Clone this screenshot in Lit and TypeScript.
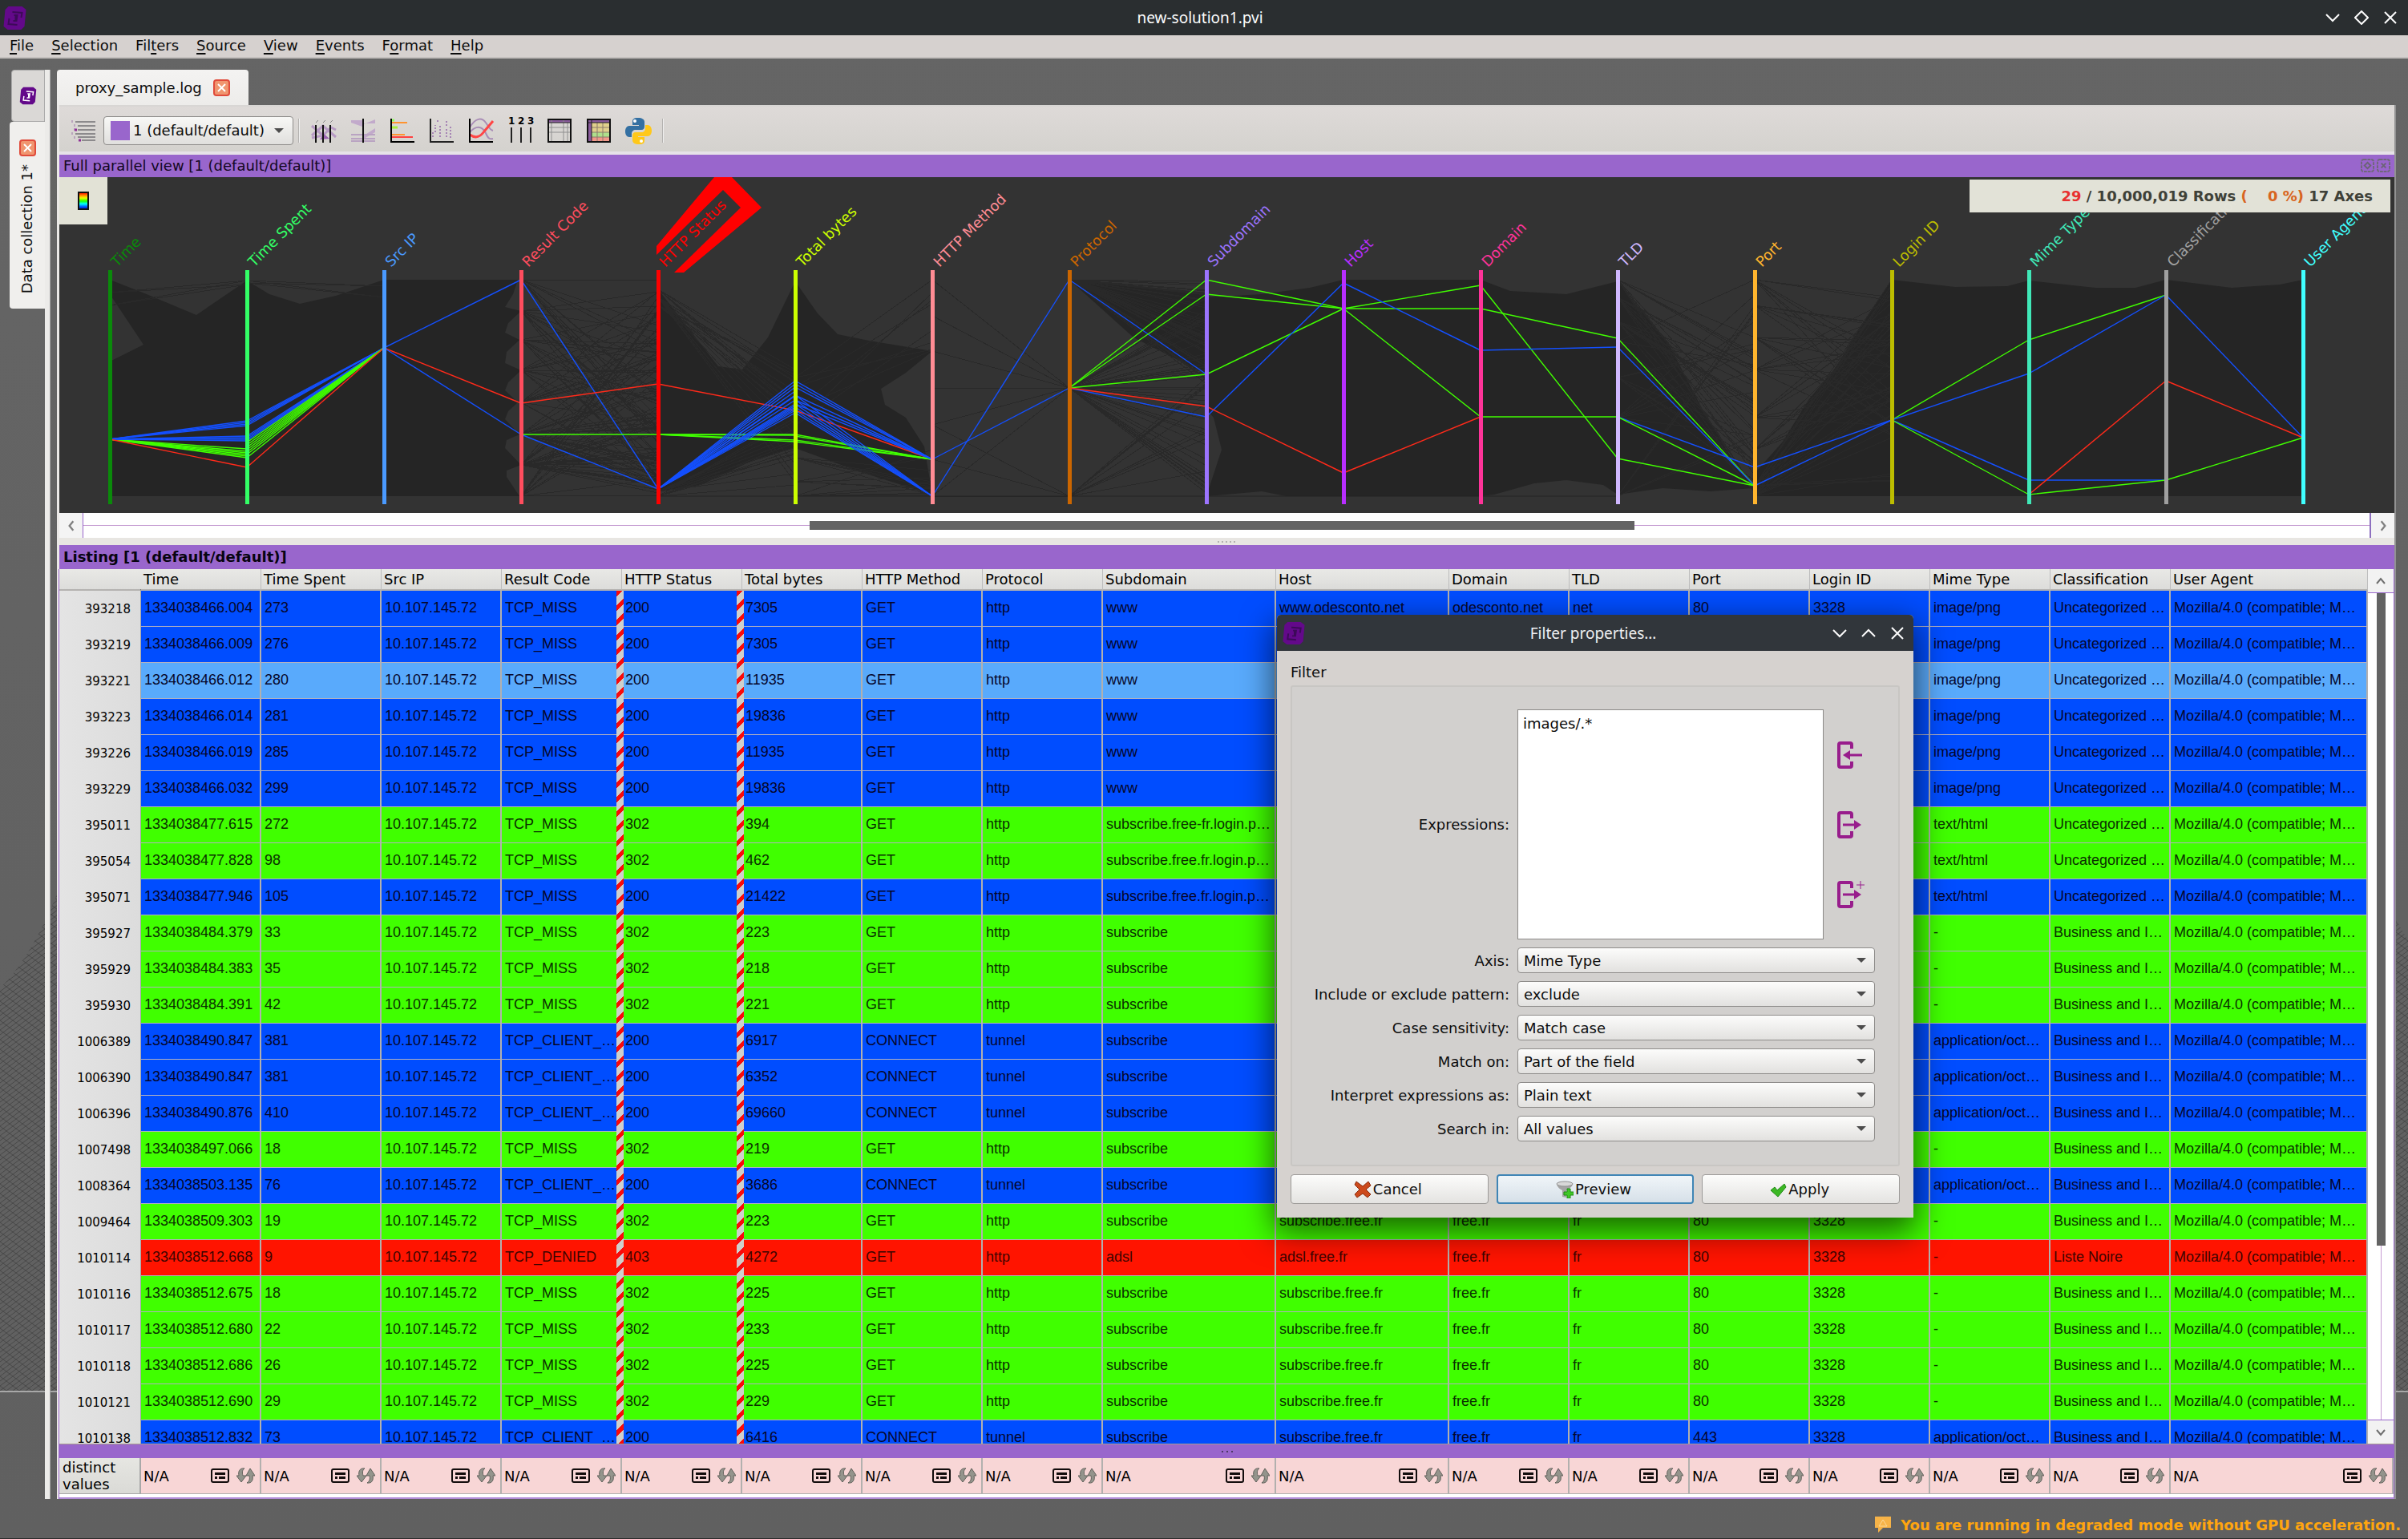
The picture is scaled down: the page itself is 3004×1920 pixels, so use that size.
import { LitElement, html, svg, css } from "lit";
import { customElement } from "lit/decorators.js";
import { classMap } from "lit/directives/class-map.js";

type Tone = "blue" | "green" | "red" | "selected";
type Row = { id: string; tone: Tone; cells: string[] };

const COLUMNS: [string, number][] = [
  ["Time", 150], ["Time Spent", 150], ["Src IP", 150], ["Result Code", 150],
  ["HTTP Status", 150], ["Total bytes", 150], ["HTTP Method", 150], ["Protocol", 150],
  ["Subdomain", 216], ["Host", 216], ["Domain", 150], ["TLD", 150], ["Port", 150],
  ["Login ID", 150], ["Mime Type", 150], ["Classification", 150], ["User Agent", 0],
];

const UNCAT = "Uncategorized …";
const BIZ = "Business and I…";
const AGENT = "Mozilla/4.0 (compatible; M…";
const CLIENT = "TCP_CLIENT_…";
const OCTET = "application/oct…";

const row = (
  id: string, tone: Tone, time: string, spent: string, code: string, status: string,
  bytes: string, sub: string, host: string, domain: string, mime: string, cls: string,
): Row => {
  const tunnel = code === CLIENT;
  return {
    id, tone,
    cells: [
      "1334038" + time, spent, "10.107.145.72", code, status, bytes,
      tunnel ? "CONNECT" : "GET", tunnel ? "tunnel" : "http", sub, host, domain,
      domain.split(".").pop()!, tunnel ? "443" : "80", "3328", mime, cls, AGENT,
    ],
  };
};

const odesconto = (id: string, tone: Tone, t: string, s: string, b: string) =>
  row(id, tone, t, s, "TCP_MISS", "200", b, "www", "www.odesconto.net", "odesconto.net", "image/png", UNCAT);
const login = (id: string, tone: Tone, t: string, s: string, st: string, b: string, sub: string) =>
  row(id, tone, t, s, "TCP_MISS", st, b, sub, "login.proxad.net", "proxad.net", "text/html", UNCAT);
const miss = (id: string, t: string, s: string, b: string) =>
  row(id, "green", t, s, "TCP_MISS", "302", b, "subscribe", "subscribe.free.fr", "free.fr", "-", BIZ);
const tunnel = (id: string, t: string, s: string, b: string) =>
  row(id, "blue", t, s, CLIENT, "200", b, "subscribe", "subscribe.free.fr", "free.fr", OCTET, BIZ);

const ROWS: Row[] = [
  odesconto("393218", "blue", "466.004", "273", "7305"),
  odesconto("393219", "blue", "466.009", "276", "7305"),
  odesconto("393221", "selected", "466.012", "280", "11935"),
  odesconto("393223", "blue", "466.014", "281", "19836"),
  odesconto("393226", "blue", "466.019", "285", "11935"),
  odesconto("393229", "blue", "466.032", "299", "19836"),
  login("395011", "green", "477.615", "272", "302", "394", "subscribe.free-fr.login.p…"),
  login("395054", "green", "477.828", "98", "302", "462", "subscribe.free.fr.login.p…"),
  login("395071", "blue", "477.946", "105", "200", "21422", "subscribe.free.fr.login.p…"),
  miss("395927", "484.379", "33", "223"),
  miss("395929", "484.383", "35", "218"),
  miss("395930", "484.391", "42", "221"),
  tunnel("1006389", "490.847", "381", "6917"),
  tunnel("1006390", "490.847", "381", "6352"),
  tunnel("1006396", "490.876", "410", "69660"),
  miss("1007498", "497.066", "18", "219"),
  tunnel("1008364", "503.135", "76", "3686"),
  miss("1009464", "509.303", "19", "223"),
  row("1010114", "red", "512.668", "9", "TCP_DENIED", "403", "4272", "adsl", "adsl.free.fr", "free.fr", "-", "Liste Noire"),
  miss("1010116", "512.675", "18", "225"),
  miss("1010117", "512.680", "22", "233"),
  miss("1010118", "512.686", "26", "225"),
  miss("1010121", "512.690", "29", "229"),
  tunnel("1010138", "512.832", "73", "6416"),
];

const AXES: [string, string][] = [
  ["Time", "#0a8a0a"], ["Time Spent", "#33ff66"], ["Src IP", "#4a9aff"], ["Result Code", "#ff4d5e"],
  ["HTTP Status", "#ff0000"], ["Total bytes", "#ccff00"], ["HTTP Method", "#ff8c94"], ["Protocol", "#cc6600"],
  ["Subdomain", "#9c74ff"], ["Host", "#b82eff"], ["Domain", "#ff3399"], ["TLD", "#d0b8ff"],
  ["Port", "#ffb52e"], ["Login ID", "#bdbd00"], ["Mime Type", "#40e8b8"], ["Classification", "#a0a0a0"],
  ["User Agent", "#40ffff"],
];
const AX = (i: number) => 63 + 171 * i;

const BLUE = "#1450ff", GREEN = "#40ff00", RED = "#ff2a1a";
type Link = [axis: number, from: number, to: number, colour: string];
const spread = (axis: number, from: number, ys: number[], c: string): Link[] => ys.map((y) => [axis, from, y, c]);
const gather = (axis: number, ys: number[], to: number, c: string): Link[] => ys.map((y) => [axis, y, to, c]);
const LINKS: Link[] = [
  ...spread(0, 327, [304, 306, 308, 310], BLUE),
  ...spread(0, 327, [339, 342, 344, 346, 348, 350], GREEN),
  ...spread(0, 327, [323, 325, 327, 329], BLUE),
  [0, 327, 362, RED],
  ...gather(1, [304, 306, 308, 310, 323, 325, 327, 329], 213, BLUE),
  ...gather(1, [331, 334, 337, 340, 343, 346, 350], 213, GREEN),
  [1, 362, 213, RED],
  [2, 213, 128, BLUE], [2, 213, 282, RED], [2, 213, 321, BLUE],
  [3, 128, 389, BLUE], [3, 321, 389, BLUE], [3, 282, 258, RED], [3, 321, 321, GREEN],
  [4, 258, 291, RED], ...spread(4, 321, [321, 322, 328, 330], GREEN),
  ...spread(4, 389, [254, 258, 262, 267, 272, 273, 278, 283, 285, 287, 289, 291, 294], BLUE),
  [5, 291, 352, RED],
  ...gather(5, [321, 323, 328, 330], 352, GREEN),
  ...gather(5, [254, 258, 262, 272, 278, 283], 352, BLUE),
  ...gather(5, [272, 278, 283, 287, 291, 294], 398, BLUE),
  [6, 352, 263, BLUE], [6, 398, 128, BLUE],
  [7, 128, 246, BLUE], [7, 263, 128, GREEN], [7, 263, 146, GREEN], [7, 263, 246, GREEN],
  [7, 263, 299, BLUE], [7, 263, 286, RED],
  [8, 128, 164, GREEN], [8, 146, 164, GREEN], [8, 246, 164, GREEN], [8, 299, 132, BLUE], [8, 286, 369, RED],
  [9, 164, 135, GREEN], [9, 164, 164, GREEN], [9, 164, 299, GREEN], [9, 132, 216, BLUE], [9, 369, 299, RED],
  [10, 135, 351, GREEN], [10, 164, 201, GREEN], [10, 216, 212, BLUE], [10, 299, 299, GREEN],
  [11, 201, 385, GREEN], [11, 212, 385, BLUE], [11, 299, 362, BLUE], [11, 299, 385, GREEN], [11, 351, 385, GREEN],
  [12, 362, 303, BLUE], [12, 385, 303, BLUE],
  [13, 303, 203, GREEN], [13, 303, 245, BLUE], [13, 303, 378, BLUE], [13, 303, 396, GREEN],
  [14, 203, 147, GREEN], [14, 245, 147, BLUE], [14, 378, 378, BLUE], [14, 396, 378, GREEN], [14, 396, 254, RED],
  [15, 147, 325, BLUE], [15, 254, 325, RED], [15, 378, 325, GREEN],
];

// Areas where ten million unselected events merge into a solid shade
const MASSES = [
  "63,128 104,144 171,172 234,129 234,398 63,398 63,230 105,209 63,146",
  "234,129 262,146 300,158 345,148 381,136 405,128 405,398 234,398",
  "405,128 572,128 566,146 556,162 576,167 560,182 556,194 574,203 558,218 556,232 576,241 560,256 556,266 572,281 560,292 556,302 574,321 558,328 556,338 576,359 558,366 558,374 574,398 405,398",
  "747,140 822,236 852,240 884,200 918,130 918,338 868,352 800,384 747,392",
  "918,130 946,170 971,196 1010,204 1089,217 1056,244 1025,264 1030,284 1056,300 1079,336 1089,396 1000,368 918,338",
  "1260,128 1431,144 1431,246 1340,200",
  "1431,150 1500,146 1560,138 1602,128 1602,398 1530,398 1500,392 1455,396 1431,398 1450,340 1440,300 1431,290",
  "1602,128 1773,128 1773,398 1602,398",
  "1773,128 1810,142 1880,146 1944,130 1944,396 1926,384 1880,378 1840,382 1790,396 1773,398",
  "1944,130 1974,168 2006,205 2050,290 2086,350 2113,388 2060,392 2000,388 1944,396",
  "2286,128 2246,189 2214,240 2182,278 2150,330 2118,366 2115,398 2286,398",
  "2286,128 2365,137 2430,136 2457,129 2540,138 2590,138 2628,128 2710,138 2770,134 2799,128 2799,398 2286,398",
];

function fan(seed: number, axis: number, from: number[], lo: number, hi: number, each: number) {
  let s = seed;
  const rnd = () => ((s = (s * 16807) % 2147483647) / 2147483647);
  let d = "";
  for (const y of from)
    for (let i = 0; i < each; i++) d += `M${AX(axis)} ${y}L${AX(axis + 1)} ${Math.round(lo + rnd() * (hi - lo))}`;
  return d;
}
const cross = (axis: number, a: number[], b: number[]) =>
  a.flatMap((y) => b.map((z) => `M${AX(axis)} ${y}L${AX(axis + 1)} ${z}`)).join("");

const THREADS = [
  cross(0, [160, 144], [129, 134]), cross(1, [129, 132], [136, 150]),
  fan(7, 3, [128, 167, 203, 241, 281, 321, 359, 398], 128, 398, 12),
  fan(17, 3, [321, 359], 300, 398, 20),
  fan(11, 4, [398, 392, 150], 300, 398, 7), fan(21, 4, [140, 150, 160], 240, 300, 5),
  fan(13, 5, [398, 380, 350], 340, 398, 5), fan(15, 5, [250, 262, 290, 310], 128, 217, 2),
  cross(6, [128, 173, 217, 263], [263]), cross(6, [309, 352, 398], [263, 398]),
  fan(23, 7, [128], 130, 260, 46), fan(29, 7, [263], 150, 398, 46), fan(31, 7, [398], 250, 398, 9),
  fan(37, 11, [128, 150, 180], 200, 398, 10), fan(41, 11, [205, 250, 300, 398], 128, 398, 6),
  fan(43, 12, [128, 160, 200, 240, 300, 340], 150, 330, 7), fan(47, 12, [385, 398], 128, 398, 12),
].join("");

const logo = (mark: string) => svg`
  <path d="M7 1h17l5 4-2 21-4 4H6l-5-4L3 5z" fill="#63098a"/>
  <path d="M12 8l12 1-1 6M8 16l-1 7 11 1M14 12h4l-1 7h-4M16 12v7" fill="none" stroke=${mark} stroke-width="2"/>`;

const closeIcon = html`<svg class="close-icon" viewBox="0 0 21 21" aria-hidden="true">
  <rect x="1" y="1" width="19" height="19" rx="3" fill="#f0956f" stroke="#e04a3a" stroke-width="2"/>
  <path d="M6 6l9 9M15 6l-9 9" stroke="#fff" stroke-width="2"/></svg>`;

const arrow = html`<svg class="arrow" viewBox="0 0 12 6" aria-hidden="true"><path d="M0 0h12L6 6z" fill="#4c4c4c"/></svg>`;

const winIcon = (kind: "down" | "up" | "diamond" | "close") => html`<svg class="win-icon" viewBox="0 0 18 18" aria-hidden="true">
  <path fill="none" stroke="#fcfcfc" stroke-width="2" d=${{
    down: "M1 5l8 8 8-8", up: "M1 13l8-8 8 8", diamond: "M9 1l8 8-8 8-8-8z", close: "M2 2l14 14M16 2L2 16",
  }[kind]}/></svg>`;

const TOOLS: [string, unknown][] = [
  ["Full parallel view", svg`
    <path d="M1 10l14 12M1 22l14-12 16 14M1 25l14-3 10-10 6 3" stroke="#b79ac4" stroke-width="3" fill="none"/>
    <path d="M11 27l5-7 7 6z" fill="#9a62b0"/>
    <path d="M6 9v22M15 9v22M24 9v22" stroke="#111" stroke-width="2"/>
    <path d="M6 6l3-3M15 6l3-3M24 6l3-3" stroke="#888" stroke-width="1"/>`],
  ["Zoomed parallel view", svg`
    <path d="M1 3h14v8L1 6zM17 8l14-6v5H17zM17 22l14-9v5l-14 8z" fill="#c2aacb"/>
    <path d="M1 21h30M1 26h15M1 29h30M17 26h14" stroke="#b9a3c2" stroke-width="2"/>
    <path d="M16 1v30" stroke="#111" stroke-width="2"/>`],
  ["Hit count view", svg`
    <path d="M3 3h3" stroke="#90ff60" stroke-width="3"/><path d="M3 6h19M3 21h16" stroke="#ff9430" stroke-width="2"/>
    <path d="M3 12h7" stroke="#a8f03c" stroke-width="3"/><path d="M3 24h26" stroke="#ff4040" stroke-width="2"/>
    <path d="M2 1v29h29" stroke="#000" stroke-width="2" fill="none"/>`],
  ["Scatter view", svg`
    <path d="M5 24v-8M8 18v-9M14 24V10M22 24V14M27 25V11M22 10V3M11 3v2" stroke="#a684b4" stroke-width="2" stroke-dasharray="2 2"/>
    <path d="M2 1v29h29" stroke="#222" stroke-width="2" fill="none"/>`],
  ["Time series view", svg`
    <path d="M2 12C9 0 17-1 22 6s5 9 9 10M2 18c7-8 15-9 20 1 3 7 5 8 9 7" stroke="#a98db6" stroke-width="2" fill="none"/>
    <path d="M2 21c7 5 13 3 18-4l11-13" stroke="#ff4545" stroke-width="3" fill="none"/>
    <path d="M2 1v29h29" stroke="#000" stroke-width="2" fill="none"/>`],
  ["Axes combination", svg`
    <text x="1" y="8" class="digits">1</text><text x="13" y="8" class="digits">2</text><text x="25" y="8" class="digits">3</text>
    <path d="M5 12v19M17 12v19M29 12v19" stroke="#222" stroke-width="2"/>`],
  ["Listing", svg`
    <path d="M2 2h28v4H2z" fill="#8a5c9c"/><path d="M2 12h28M2 18h28M6 2v28M21 2v28M26 6v24" stroke="#8f8f8f" stroke-width="1"/>
    <path d="M2 6h28" stroke="#222"/><path d="M2 2h28v28H2z" fill="none" stroke="#111" stroke-width="2"/>`],
  ["Statistics", svg`
    <path d="M2 2h28v4H2zM2 6h5v24H2z" fill="#8a5c9c"/><path d="M7 6h23v12H7z" fill="#e0d08c"/><path d="M7 18h23v6H7z" fill="#aee08c"/><path d="M7 24h23v6H7z" fill="#f2988a"/>
    <path d="M7 12h23M7 18h23M7 24h23M14 6v24M21 6v24" stroke="#8c7c6c"/><path d="M2 6h28M7 2v28" stroke="#222"/>
    <path d="M2 2h28v28H2z" fill="none" stroke="#111" stroke-width="2"/>`],
  ["Python console", svg`
    <path d="M16 0c-6 0-7 2-7 5v4h8v1H5c-3 0-5 3-5 7s2 7 5 7h3v-4c0-3 2-5 5-5h7c3 0 4-2 4-4V5c0-3-3-5-8-5z" fill="#3470a2"/>
    <path d="M17 33c6 0 7-2 7-5v-4h-8v-1h12c3 0 5-3 5-7s-2-7-5-7h-3v4c0 3-2 5-5 5h-7c-3 0-4 2-4 4v6c0 3 3 5 8 5z" fill="#ffc81a"/>
    <circle cx="12" cy="4" r="2" fill="#fff"/><circle cx="20" cy="29" r="2" fill="#fff"/>`],
];

@customElement("parallel-view")
export class ParallelView extends LitElement {
  static styles = css`
    :host { display: block; position: relative; background: #333333; overflow: hidden; }
    .plot { display: block; width: 100%; }
    .label { font: 18px "DejaVu Sans", sans-serif; }
    .palette {
      position: absolute; left: 0; top: 0; width: 60px; height: 59px; padding: 0; border: 0;
      background: #e2e2d6; display: grid; place-items: center;
    }
    .ramp {
      width: 10px; height: 19px; border: 2px solid #101010;
      background: linear-gradient(#ff2000, #ffb000 20%, #e8ff00 32%, #20ff00 52%, #00ffff 70%, #0060ff 88%, #0020d0);
    }
    .counter {
      position: absolute; right: 5px; top: 3px; width: 525px; height: 41px; box-sizing: border-box;
      padding-right: 22px; background: rgba(230, 230, 218, 0.98); color: #3f4138; text-align: right; white-space: pre;
      font: bold 18px/41px "DejaVu Sans", sans-serif;
    }
    .hit { color: #e83030; }
    .pct { color: #d86420; }
  `;
  render() {
    return html`
      <svg class="plot" viewBox="0 0 2913 419" role="img" aria-label="Parallel coordinates">
        <g fill="#252525">${MASSES.map((p) => svg`<polygon points=${p}/>`)}</g>
        <path d=${THREADS} stroke="#292929" fill="none" shape-rendering="crispEdges"/>
        <path d="M747 398H1944" stroke="#252525"/>
        <g stroke-width="1.4">
          ${LINKS.map(([a, y, z, c]) => svg`<path d=${`M${AX(a)} ${y}L${AX(a + 1)} ${z}`} stroke=${c}/>`)}
        </g>
        <polygon points="745,97 745,86 817,0 839,0 876,38 779,119 767,119 850,38 828,16" fill="#ff0000"/>
        ${AXES.map(([name, c], i) => svg`
          <rect x=${AX(i) - 2} y="116" width="5" height="292" fill=${c}/>
          <text class="label" fill=${c} transform=${`translate(${AX(i) + 9} 113) rotate(-45)`}>${name}</text>`)}
      </svg>
      <button class="palette" aria-label="Colour ramp"><span class="ramp"></span></button>
      <div class="counter"><span class="hit">29</span> / 10,000,019 Rows <span class="pct">(    0 %)</span> 17 Axes</div>`;
  }
}

@customElement("event-listing")
export class EventListing extends LitElement {
  static styles = css`
    :host { display: flex; flex-direction: column; min-height: 0; color: #000; font: 18px "DejaVu Sans", sans-serif; }
    .area { display: flex; flex: 1; min-height: 0; }
    .viewport { position: relative; flex: 1; min-width: 0; overflow: hidden; }
    table { width: 100%; table-layout: fixed; border-collapse: separate; border-spacing: 0; }
    .rowcol { width: 102px; }
    .head th {
      box-sizing: border-box; height: 27px; padding: 0 3px; text-align: left; font-weight: normal;
      background: linear-gradient(#e9e9e6, #dcdcda); border-bottom: 2px solid #b4b2b0; border-right: 1px solid #bdbdbd;
      white-space: nowrap; line-height: 24px;
    }
    .head th:first-child { border-right-color: transparent; }
    .num {
      box-sizing: border-box; height: 45px; padding: 0 12px 0 0; text-align: right;
      font-weight: normal; font-size: 15px; background: linear-gradient(90deg, #e4e4e4, #dcdcdc); border-right: 1px solid #a4a4a4;
    }
    .cell {
      box-sizing: border-box; height: 45px; padding: 0 3px 3px 4px; border-right: 2px solid #b2b0ae; border-bottom: 1px solid #b2b0c0;
      overflow: hidden; text-overflow: ellipsis; white-space: nowrap;
      font-family: "Liberation Sans", Arial, sans-serif; line-height: 20px; color: #06062a;
    }
    .blue .cell { background: #004dff; }
    .green .cell { background: #40ff00; color: #0a3000; }
    .red .cell { background: #ff1400; color: #3c0400; }
    .selected .cell { background: #59aafc; }
    .stripe {
      position: absolute; top: 27px; bottom: 0; width: 9px;
      background: repeating-linear-gradient(135deg, #fa0a0a 0 5px, #cfcfcb 5px 13px);
    }
    .stripe-a { left: 695px; }
    .stripe-b { left: 845px; }
    .vbar { flex: none; width: 32px; display: grid; grid-template-rows: 30px 1fr 30px; background: #fff; border-right: 1px solid #9966cc; }
    .vbtn { border: 0; padding: 0; background: #f2f2f2; display: grid; place-items: center; }
    .vbtn:first-child { border-bottom: 1px solid #9966cc; }
    .vbtn:last-child { border-top: 1px solid #9966cc; }
    .chev { width: 12px; height: 12px; fill: none; stroke: #6e6e6e; stroke-width: 2; }
    .vtrack { display: flex; flex-direction: column; align-items: center; background: linear-gradient(#c59ad2, #c59ad2) center / 1px 100% no-repeat; }
    .vthumb { width: 11px; flex: 0 0 79%; background: #636363; }
    .grip { height: 17px; background: #9966cc; border-top: 1px solid #a79a90; display: grid; place-items: center; }
    .dots { width: 14px; height: 2px; background: repeating-linear-gradient(90deg, #4c3866 0 2px, transparent 2px 6px); }
    .stats { background: #fff; padding-bottom: 4px; border-right: 1px solid #9966cc; border-bottom: 2px solid #b28cd8; }
    .stats th {
      box-sizing: border-box; height: 45px; padding: 0 4px; text-align: left; font-weight: normal; line-height: 21px;
      background: linear-gradient(#e6e6e2, #dadad6); border-right: 2px solid #a8a8a8; border-bottom: 1px solid #a8a8a8;
    }
    .stats td { box-sizing: border-box; height: 45px; padding: 0 6px 0 3px; background: #f8d6d6; border-right: 2px solid #b2b0ae; border-bottom: 1px solid #b2b0ae; }
    .stat { display: flex; align-items: center; gap: 9px; }
    .value { flex: 1; }
    .mini { display: block; border: 0; padding: 0; background: none; height: 20px; }
    .mini svg { display: block; width: 23px; height: 20px; }
  `;
  private cols() {
    return html`<colgroup><col class="rowcol" />${COLUMNS.map(([, w]) => (w ? html`<col style="width:${w}px" />` : html`<col />`))}</colgroup>`;
  }
  render() {
    return html`
      <div class="area">
        <div class="viewport">
          <table>
            ${this.cols()}
            <thead><tr class="head"><th></th>${COLUMNS.map(([n]) => html`<th scope="col">${n}</th>`)}</tr></thead>
            <tbody>
              ${ROWS.map((r) => html`<tr class=${classMap({ [r.tone]: true })}>
                <th class="num" scope="row">${r.id}</th>${r.cells.map((c) => html`<td class="cell">${c}</td>`)}
              </tr>`)}
            </tbody>
          </table>
          <div class="stripe stripe-a"></div>
          <div class="stripe stripe-b"></div>
        </div>
        <div class="vbar">
          <button class="vbtn" aria-label="Scroll up"><svg class="chev" viewBox="0 0 12 12"><path d="M1 9l5-6 5 6"/></svg></button>
          <div class="vtrack"><div class="vthumb"></div></div>
          <button class="vbtn" aria-label="Scroll down"><svg class="chev" viewBox="0 0 12 12"><path d="M1 3l5 6 5-6"/></svg></button>
        </div>
      </div>
      <div class="grip"><span class="dots"></span></div>
      <div class="stats">
        <table>
          ${this.cols()}
          <tbody><tr><th scope="row">distinct<br />values</th>
            ${COLUMNS.map(([n]) => html`<td><div class="stat"><span class="value">N/A</span>
              <button class="mini" aria-label=${"Show values of " + n}><svg viewBox="0 0 23 20">
                <rect x="1" y="2" width="21" height="16" rx="2" fill="none" stroke="#120c0c" stroke-width="2"/>
                <path d="M5 6h13v3H5zM5 11h3v3H5zM10 11h8v3h-8z" fill="#120c0c"/></svg></button>
              <button class="mini" aria-label=${"Refresh " + n}><svg viewBox="0 0 23 20">
                <path d="M10 1C3 0 2 6 3 10H0l6 8 6-8H8C7 6 7 3 10 1zM13 19c7 1 8-5 7-9h3l-6-9-5 9h4c1 4 0 7-3 9z" fill="#94948c" stroke="#60605a"/></svg></button>
            </div></td>`)}
          </tr></tbody>
        </table>
      </div>`;
  }
}

const FIELDS: [string, string][] = [
  ["Axis:", "Mime Type"], ["Include or exclude pattern:", "exclude"], ["Case sensitivity:", "Match case"],
  ["Match on:", "Part of the field"], ["Interpret expressions as:", "Plain text"], ["Search in:", "All values"],
];

@customElement("filter-dialog")
export class FilterDialog extends LitElement {
  static styles = css`
    :host {
      display: flex; flex-direction: column; background: #d6d2cf; color: #0c0c0c; border-radius: 5px 5px 0 0;
      font: 18px "DejaVu Sans", sans-serif; box-shadow: 0 14px 40px 4px rgba(0, 0, 0, 0.6);
    }
    .bar {
      display: grid; grid-template-columns: 1fr auto 1fr; align-items: center; height: 45px; padding: 0 11px 0 6px;
      background: #31363b; color: #eff0f1; border-radius: 5px 5px 0 0; font-family: "Noto Sans", sans-serif; font-size: 19px; line-height: 44px;
    }
    .logo { width: 30px; height: 30px; }
    .controls { justify-self: end; display: flex; gap: 18px; }
    .controls button, .io { border: 0; padding: 0; background: none; }
    .win-icon { display: block; width: 18px; height: 18px; }
    .body { padding: 15px 17px; }
    fieldset { border: 0; margin: 0; padding: 0; min-width: 0; }
    legend { padding: 0; line-height: 24px; }
    .group { margin-top: 4px; border: 2px solid #c8c6c3; border-radius: 3px; background: #d2d0ce; padding: 28px 29px 29px 8px; }
    .form { display: grid; grid-template-columns: 263px 1fr; column-gap: 10px; row-gap: 10px; align-items: center; }
    .form > label { text-align: right; white-space: nowrap; }
    .expr { display: flex; gap: 16px; align-items: stretch; }
    textarea {
      box-sizing: border-box; flex: 1; min-width: 0; height: 287px; padding: 6px; resize: none; border: 1px solid #8c8a88;
      background: #fff; color: #0c0c0c; font: 18px/22px "DejaVu Sans", sans-serif; display: block;
    }
    .ios { width: 48px; display: flex; flex-direction: column; align-items: flex-start; justify-content: center; gap: 51px; }
    .io svg { display: block; width: 36px; height: 36px; }
    .combo { display: grid; align-items: center; }
    .combo > * { grid-area: 1 / 1; }
    .combo select {
      appearance: none; height: 32px; width: 100%; padding: 0 30px 0 7px; border: 1px solid #8e8c8a; border-radius: 4px;
      background: linear-gradient(#fcfcfb, #e2e1df); color: #0c0c0c; font: 18px "DejaVu Sans", sans-serif;
    }
    .arrow { justify-self: end; width: 12px; height: 6px; margin-right: 11px; pointer-events: none; }
    .actions { display: grid; grid-template-columns: repeat(3, 1fr); gap: 10px; margin-top: 10px; }
    .action {
      height: 37px; display: flex; align-items: center; justify-content: center; gap: 2px; padding: 0 4px 0 0;
      border: 1px solid #9c9a98; border-radius: 4px; background: linear-gradient(#fcfcfb, #e4e3e1);
      color: #0c0c0c; font: 18px "DejaVu Sans", sans-serif;
    }
    .primary { border: 2px solid #3f85b5; background: linear-gradient(#f0f5f9, #d6e0e8); }
    .action svg { width: 22px; height: 22px; }
  `;
  render() {
    const bracket = svg`<path d="M19 10V5Q19 3 17 3H5Q3 3 3 5v26q0 2 2 2h12q2 0 2-2v-5" fill="none" stroke="#981d8c" stroke-width="4"/>`;
    return html`
      <header class="bar">
        <svg class="logo" viewBox="0 0 30 31" aria-hidden="true">${logo("#3c0a58")}</svg>
        <span>Filter properties…</span>
        <span class="controls">
          <button aria-label="Minimize">${winIcon("down")}</button>
          <button aria-label="Maximize">${winIcon("up")}</button>
          <button aria-label="Close">${winIcon("close")}</button>
        </span>
      </header>
      <div class="body">
        <fieldset>
          <legend>Filter</legend>
          <div class="group"><div class="form">
            <label for="expr">Expressions:</label>
            <div class="expr">
              <textarea id="expr" .value=${"images/.*"} spellcheck="false"></textarea>
              <div class="ios">
                <button class="io" aria-label="Load expressions"><svg viewBox="0 0 36 36">${bracket}<path d="M32 18H14" stroke="#981d8c" stroke-width="3"/><path d="M17 12v12l-9-6z" fill="#981d8c"/></svg></button>
                <button class="io" aria-label="Save expressions"><svg viewBox="0 0 36 36">${bracket}<path d="M8 18h16" stroke="#981d8c" stroke-width="3"/><path d="M22 12v12l9-6z" fill="#981d8c"/></svg></button>
                <button class="io" aria-label="Save expressions as"><svg viewBox="0 0 36 36">${bracket}<path d="M8 18h16" stroke="#981d8c" stroke-width="3"/><path d="M22 12v12l9-6z" fill="#981d8c"/><path d="M30 1v10M25 6h10" stroke="#981d8c" stroke-width="1"/></svg></button>
              </div>
            </div>
            ${FIELDS.map(([l, v], i) => html`<label for=${"f" + i}>${l}</label>
              <span class="combo"><select id=${"f" + i}><option>${v}</option></select>${arrow}</span>`)}
          </div></div>
        </fieldset>
        <div class="actions">
          <button class="action"><svg viewBox="0 0 22 22" aria-hidden="true"><path d="M3 1l8 6 7-6 3 5-6 5 6 6-4 4-6-5-7 5-3-4 6-6-6-6z" fill="#cc4a1c" stroke="#8c2c0c"/></svg>Cancel</button>
          <button class="action primary"><svg viewBox="0 0 22 22" aria-hidden="true"><path d="M1 5q2 5 7 7v8l5 1v-9q6-3 8-7-10 4-20 0z" fill="#a4a4a4"/><ellipse cx="11" cy="4" rx="10" ry="3" fill="#d8d8d8" stroke="#909090"/><path d="M14 10h4v4h4v4h-4v4h-4v-4h-4v-4h4z" fill="#40c828" stroke="#1c8c14"/></svg>Preview</button>
          <button class="action"><svg viewBox="0 0 22 22" aria-hidden="true"><path d="M2 12l5-4 3 4 9-8 2 4-10 12z" fill="#3cb824" stroke="#1f8a14"/></svg>Apply</button>
        </div>
      </div>`;
  }
}

// Menu titles with the index of the mnemonic letter
const MENU: [string, number][] = [
  ["File", 0], ["Selection", 0], ["Filters", 3], ["Source", 0], ["View", 0], ["Events", 0], ["Format", 1], ["Help", 0],
];

@customElement("app-root")
export class AppRoot extends LitElement {
  static styles = css`
    :host {
      display: flex; flex-direction: column; height: 100vh; position: relative; overflow: hidden;
      background: linear-gradient(#656565, #606060); color: #0c0c0c; font: 18px "DejaVu Sans", sans-serif;
    }
    button { border: 0; padding: 0; background: none; font: inherit; color: inherit; }
    .title {
      flex: none; display: grid; grid-template-columns: 1fr auto 1fr; align-items: center; height: 44px; padding: 0 13px 0 3px;
      background: #2a2e30; color: #fcfcfc; font-family: "Noto Sans", sans-serif; font-size: 19px; line-height: 42px;
    }
    .logo { width: 31px; height: 31px; }
    .controls { justify-self: end; display: flex; gap: 18px; }
    .win-icon { display: block; width: 18px; height: 18px; }
    .menu { flex: none; display: flex; height: 29px; box-sizing: border-box; padding-left: 2px; background: #d6d1cf; border-bottom: 2px solid #c4c0be; }
    .menu a { padding: 0 12px 0 10px; line-height: 25px; color: inherit; text-decoration: none; }
    .menu u { text-underline-offset: 3px; text-decoration-thickness: 2px; }
    .work { flex: 1; min-height: 0; display: flex; gap: 8px; padding: 14px 15px 0 12px; position: relative; }
    .texture { position: absolute; inset: 0; width: 100%; height: 100%; }
    .side { position: relative; flex: none; width: 51px; box-sizing: border-box; display: flex; flex-direction: column; align-items: flex-start; border-right: 1px solid #a8a8a8;
      background: linear-gradient(90deg, transparent 44px, #ecebe9 44px); }
    .side-tab { box-sizing: border-box; display: flex; flex-direction: column; align-items: center; }
    .home { width: 42px; margin-left: 2px; height: 65px; background: #dad8d6; border: 1px solid #aaa; border-radius: 4px 0 0 4px; justify-content: center; }
    .home svg { width: 22px; height: 25px; }
    .active { width: 44px; height: 233px; padding-top: 22px; gap: 10px; background: #f0efed; border-radius: 4px 0 0 4px; }
    .vertical { writing-mode: vertical-rl; transform: rotate(180deg); line-height: 24px; white-space: nowrap; }
    .close-icon { display: block; width: 21px; height: 21px; }
    .main { position: relative; flex: 1; min-width: 0; display: flex; flex-direction: column; }
    .tabs { flex: none; display: flex; height: 44px; }
    .tab { display: flex; align-items: center; gap: 14px; padding: 0 23px; background: linear-gradient(#f4f3f2, #edecea); border-radius: 4px 4px 0 0; }
    .frame { flex: 1; min-height: 0; display: flex; flex-direction: column; border-left: 3px solid #ebe9e7; border-right: 2px solid #929292; }
    .tools { flex: none; display: flex; align-items: center; height: 62px; box-sizing: border-box; padding: 3px 0 0 14px;
      border-top: 2px solid #d8d6d4; border-bottom: 4px solid #e6e2e8; background: linear-gradient(#dedad8, #d4d2ce 56px, #9c9a98 56px); }
    .tree { width: 32px; height: 32px; margin-right: 9px; }
    .combo { display: grid; align-items: center; margin-right: 6px; }
    .combo > * { grid-area: 1 / 1; }
    .combo select {
      appearance: none; width: 237px; height: 36px; padding: 0 30px 0 36px; border: 1px solid #8e8c8a; border-radius: 4px; color: #0c0c0c;
      font: 18px "DejaVu Sans", sans-serif;
      background: linear-gradient(#9966cc, #9966cc) 8px 5px / 24px 24px no-repeat, linear-gradient(#f8f8f6, #e0dfdd);
    }
    .arrow { justify-self: end; width: 12px; height: 6px; margin-right: 12px; pointer-events: none; }
    .sep { width: 1px; height: 30px; background: #b4b2b0; border-right: 1px solid #f0f0f0; }
    .toolset { display: flex; gap: 17px; padding: 0 14px; }
    .tool svg { display: block; width: 32px; height: 32px; overflow: visible; }
    .digits { font: bold 12px "DejaVu Sans", sans-serif; }
    .strip { flex: none; box-sizing: border-box; display: flex; align-items: center; padding: 0 5px; background: #9966cc; color: #14081f; margin: 0; font-size: 18px; font-weight: normal; }
    .strip-view { height: 28px; justify-content: space-between; padding-bottom: 1px; }
    .strip-list { height: 30px; font-weight: bold; color: #080410; padding-bottom: 2px; }
    .dock { display: flex; gap: 3px; }
    .dock svg { display: block; width: 17px; height: 17px; }
    .hbar { flex: none; height: 31px; display: grid; grid-template-columns: 30px 1fr 31px; background: #fff; }
    .hbtn { background: #f4f4f4; display: grid; place-items: center; }
    .hbtn:first-child { border-right: 1px solid #9966cc; }
    .hbtn:last-child { border-left: 2px solid #8e70c0; }
    .hbtn svg { width: 14px; height: 14px; fill: none; stroke: #808080; stroke-width: 2; }
    .htrack { display: grid; grid-template-columns: 906fr 1029fr 917fr; align-items: center; background: linear-gradient(#c59ad2, #c59ad2) center / 100% 1px no-repeat; }
    .hthumb { grid-column: 2; height: 11px; background: #636363; }
    .splitter { flex: none; height: 9px; background: #e8e6e2; display: grid; place-items: center; }
    .splitter span { width: 24px; height: 2px; background: repeating-linear-gradient(90deg, #b4b2b0 0 2px, transparent 2px 5px); }
    event-listing { flex: 1; border-left: 1px solid #9966cc; margin-left: -1px; }
    .status { flex: none; box-sizing: border-box; height: 50px; display: flex; align-items: center; justify-content: flex-end; gap: 12px; padding: 15px 9px 0 0;
      color: #ffa50f; font-weight: bold; border-bottom: 1px solid #2c2c2c; }
    .status svg { width: 20px; height: 20px; }
    filter-dialog { position: absolute; left: 1593px; top: 767px; width: 794px; height: 752px; }
  `;
  render() {
    return html`
      <header class="title">
        <svg class="logo" viewBox="0 0 30 31" aria-hidden="true">${logo("#3c0a58")}</svg>
        <span>new-solution1.pvi</span>
        <span class="controls">
          <button aria-label="Minimize">${winIcon("down")}</button>
          <button aria-label="Restore">${winIcon("diamond")}</button>
          <button aria-label="Close">${winIcon("close")}</button>
        </span>
      </header>
      <nav class="menu">
        ${MENU.map(([m, k]) => html`<a href="#">${m.slice(0, k)}<u>${m[k]}</u>${m.slice(k + 1)}</a>`)}
      </nav>
      <div class="work">
        <svg class="texture" aria-hidden="true">
          <defs><pattern id="hatch" width="16" height="12" patternUnits="userSpaceOnUse">
            <path d="M0 12L16 0M0 6L8 0M8 12l8-6M0 0l16 12" stroke="#484848" stroke-width="1"/></pattern></defs>
          <path d="M0 1160Q40 1120 72 1040V1662H0zM2980 1060L3004 1100V1662H2980z" fill="url(#hatch)"/>
          <rect y="1662" width="100%" height="2" fill="#a8a8a8"/>
        </svg>
        <div class="side">
          <button class="side-tab home" aria-label="Start page"><svg viewBox="0 0 30 31">${logo("#ffffff")}</svg></button>
          <div class="side-tab active"><button aria-label="Close data collection">${closeIcon}</button><span class="vertical">Data collection 1*</span></div>
        </div>
        <main class="main">
          <div class="tabs"><div class="tab"><span>proxy_sample.log</span><button aria-label="Close proxy_sample.log">${closeIcon}</button></div></div>
          <div class="frame">
            <div class="tools">
              <button class="tree" aria-label="Layers"><svg viewBox="0 0 32 32">
                <path d="M6 5h25M9 10h22M9 15h22M6 20h25M9 24h22M14 28h17" stroke="#8c8a8c" stroke-width="2"/>
                <path d="M2 3v3M5 8v3M5 13v3M2 18v3M5 23v3" stroke="#9a72a8" stroke-width="1"/><path d="M5 15h3M10 28h3" stroke="#8f2f96" stroke-width="3"/></svg></button>
              <span class="combo"><select aria-label="Layer"><option>1 (default/default)</option></select>${arrow}</span>
              <span class="sep"></span>
              <div class="toolset">
                ${TOOLS.map(([n, g]) => html`<button class="tool" aria-label=${n}><svg viewBox="0 0 32 32">${g}</svg></button>`)}
              </div>
              <span class="sep"></span>
            </div>
            <h2 class="strip strip-view">Full parallel view [1 (default/default)]
              <span class="dock">
                ${["M9 5l4 4-4 4-4-4z", "M6 6l6 6M12 6l-6 6"].map((d) => html`<button aria-label="Dock control"><svg viewBox="0 0 18 18">
                  <rect x="1" y="1" width="16" height="16" rx="3" fill="none" stroke="#6f6878" stroke-dasharray="4 1" stroke-width="2"/><path d=${d} fill="none" stroke="#6b6474" stroke-width="2"/></svg></button>`)}
              </span></h2>
            <parallel-view></parallel-view>
            <div class="hbar">
              <button class="hbtn" aria-label="Scroll left"><svg viewBox="0 0 12 12"><path d="M8 1L4 6l4 5"/></svg></button>
              <div class="htrack"><div class="hthumb"></div></div>
              <button class="hbtn" aria-label="Scroll right"><svg viewBox="0 0 12 12"><path d="M4 1l4 5-4 5"/></svg></button>
            </div>
            <div class="splitter"><span></span></div>
            <h2 class="strip strip-list">Listing [1 (default/default)]</h2>
            <event-listing></event-listing>
          </div>
        </main>
      </div>
      <footer class="status">
        <svg viewBox="0 0 20 20" aria-hidden="true"><path d="M0 0h20v14H10l-6 6v-6H0z" fill="#f6b348"/><path d="M10 4l5 8H5z" fill="none" stroke="#fbd898"/></svg>
        <span>You are running in degraded mode without GPU acceleration.</span>
      </footer>
      <filter-dialog role="dialog" aria-label="Filter properties"></filter-dialog>`;
  }
}
